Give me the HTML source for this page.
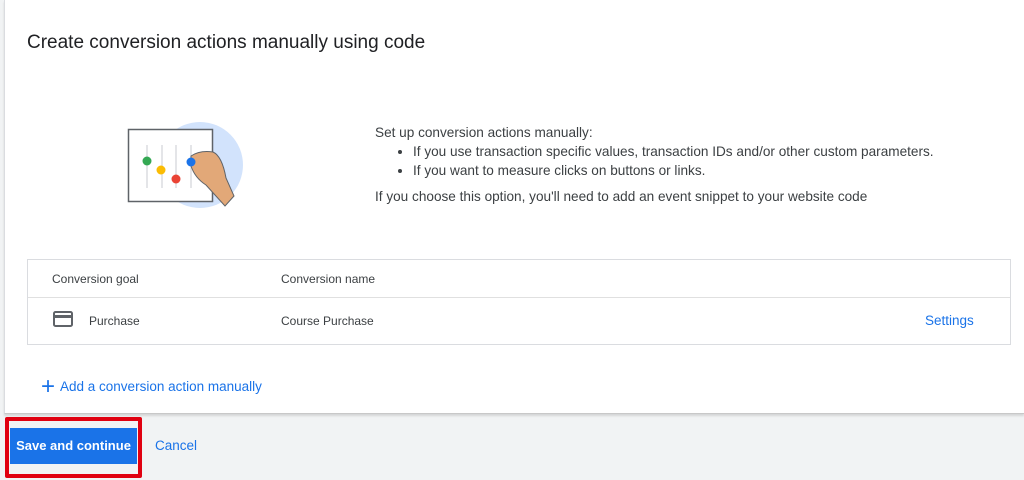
<!DOCTYPE html>
<html><head><meta charset="utf-8"><style>
*{margin:0;padding:0;box-sizing:border-box}
body{width:1024px;height:480px;overflow:hidden;background:#f1f3f4;font-family:"Liberation Sans",Arial,sans-serif;position:relative;color:#3c4043}
.card{position:absolute;left:4px;top:0;width:1020px;height:414px;background:#fff;border-left:1px solid #dadce0;border-bottom:1px solid #c8c8c8;box-shadow:0 2px 2px rgba(0,0,0,.12)}
h1{position:absolute;left:27px;top:32px;font-size:19px;font-weight:400;color:#202124}
.desc{position:absolute;left:375px;top:123px;font-size:13.6px;color:#3c4043;line-height:19px}
.desc ul{margin-left:38px}
.table{position:absolute;left:27px;top:259px;width:984px;height:86px;border:1px solid #dadce0;font-size:12px;color:#3c4043}
.hdr{height:38px;border-bottom:1px solid #e0e0e0;position:relative}
.t{position:absolute}
.add{position:absolute;left:41px;top:370px;font-size:13.5px;color:#1a73e8}
.btn{position:absolute;left:10px;top:428px;width:127px;height:36px;background:#1a73e8;color:#fff;font-size:13px;font-weight:bold;line-height:36px;text-align:center}
.red{position:absolute;left:5px;top:417px;width:137px;height:61px;border:4px solid #e00010;border-radius:2px}
.cancel{position:absolute;left:155px;top:438px;font-size:13.5px;color:#1a73e8}
</style></head><body>
<div class="card"></div>
<h1>Create conversion actions manually using code</h1>
<svg style="position:absolute;left:100px;top:100px" width="160" height="130" viewBox="0 0 160 130">
<circle cx="100" cy="65" r="43" fill="#d2e3fc"/>
<rect x="28.5" y="29.5" width="84" height="72" fill="#fff" stroke="#5f6368" stroke-width="1.5"/>
<g stroke="#dadce0" stroke-width="1.5"><line x1="47" y1="45" x2="47" y2="88"/><line x1="62" y1="45" x2="62" y2="88"/><line x1="76" y1="45" x2="76" y2="88"/><line x1="91" y1="45" x2="91" y2="88"/></g>
<circle cx="47" cy="61" r="4.5" fill="#34a853"/><circle cx="61" cy="70" r="4.5" fill="#fbbc04"/><circle cx="76" cy="79" r="4.5" fill="#ea4335"/>
<path d="M91 56 Q100 50 113 52 Q122 56 126 78 L134 96 L125 106 Q115 95 106 85 Q95 78 91 66 Z" fill="#e2a878" stroke="#5f6368" stroke-width="1"/>
<circle cx="91" cy="62" r="4.5" fill="#1a73e8"/>
</svg>
<div class="desc">Set up conversion actions manually:
<ul><li>If you use transaction specific values, transaction IDs and/or other custom parameters.</li><li>If you want to measure clicks on buttons or links.</li></ul>
<div style="margin-top:7px">If you choose this option, you'll need to add an event snippet to your website code</div></div>
<div class="table">
<div class="hdr"><span class="t" style="left:24px;top:12px">Conversion goal</span><span class="t" style="left:253px;top:12px">Conversion name</span></div>
<div style="position:relative;height:46px">
<svg class="t" style="left:25px;top:13px" width="20" height="16" viewBox="0 0 20 16"><rect x="1" y="1" width="18" height="14" rx="1.5" fill="none" stroke="#5f6368" stroke-width="2"/><rect x="1" y="4" width="18" height="3" fill="#5f6368"/></svg>
<span class="t" style="left:61px;top:16px">Purchase</span><span class="t" style="left:253px;top:16px">Course Purchase</span>
<span class="t" style="left:897px;top:15px;color:#1a73e8;font-size:13.5px">Settings</span></div>
</div>
<div class="add"><span style="font-size:24px;position:relative;top:3px;font-weight:300;margin-right:5px">+</span>Add a conversion action manually</div>
<div class="btn">Save and continue</div>
<div class="red"></div>
<div class="cancel">Cancel</div>
</body></html>
